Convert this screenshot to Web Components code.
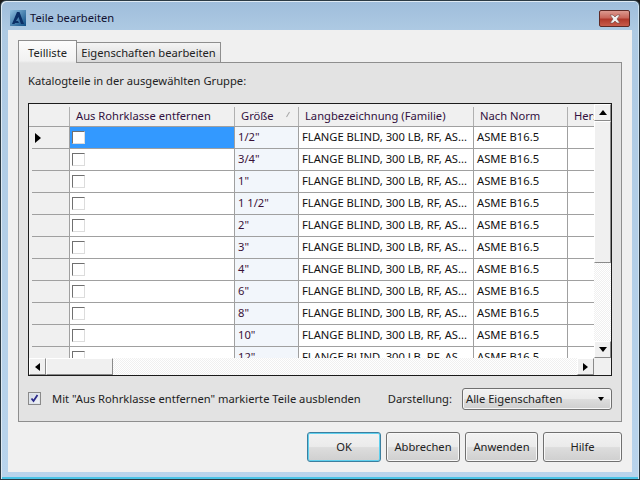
<!DOCTYPE html>
<html><head><meta charset="utf-8">
<style>
html,body{margin:0;padding:0;width:640px;height:480px;overflow:hidden;background:#1a1a1a}
body{font:11.2px/16px "Noto Sans","Open Sans",sans-serif;color:#222}
</style></head><body>
<template id="t-window"><style>
:host{display:flex;flex-direction:column;width:640px;height:480px;box-sizing:border-box;border:1px solid #2b3a44;border-radius:6px 6px 0 0;background:linear-gradient(#9fbddb 0,#aecae3 30px,#b9d4ec 100%);padding:0 7px 7px;box-shadow:inset 1px 1px 0 #dfeaf3,inset -1px 0 0 #cfe3f2,inset 0 -2px 0 #48c3e6}
.title{display:flex;align-items:center;height:29px;flex:none;gap:4px;padding:5px 0 0 2px;box-sizing:border-box;position:relative}
.t{font-size:11.2px;color:#101030}
.client{flex:1;background:#f0f0f0;display:flex;flex-direction:column;padding:10px 10px 0;min-height:0}
.x{position:absolute;right:2px;top:9px;width:31px;height:17px;box-sizing:border-box;border:1px solid #5e2a26;border-radius:2px;background:linear-gradient(#dc9a90,#c9675b 45%,#b0392c 55%,#c85c4c);display:flex;align-items:center;justify-content:center}
</style>
<div class="title">
<svg width="16" height="16" viewBox="0 0 16 16"><defs><linearGradient id="g" x1="0" x2="1" y1="0" y2="1"><stop offset="0" stop-color="#8fc0e0"/><stop offset="1" stop-color="#0e4c84"/></linearGradient></defs><rect width="16" height="16" fill="url(#g)"/><path d="M2 14L7 2h2.500L14 14h-3L8.500 7 6 11h2l1 2H5l-.500 1z" fill="#0a2f66"/></svg>
<span class="t"><slot name="title"></slot></span>
<div class="x"><svg width="14" height="10" viewBox="0 0 14 10"><path d="M2 1h3l2 2 2-2h3L9 5l3 4H9L7 7 5 9H2l3-4z" fill="#f2f2f2" stroke="#70453f" stroke-width=".6"/></svg></div>
</div>
<div class="client"><slot></slot></div>
</template>

<template id="t-tabs"><style>
:host{display:flex;flex-direction:column;flex:none}
.bar{display:flex;height:23px;align-items:flex-end;position:relative;z-index:1;margin-bottom:-1px}
.tab{box-sizing:border-box;border:1px solid #8e8e8e;border-bottom:0;height:20px;margin-bottom:1px;background:linear-gradient(#f4f4f4,#d9d9d9);width:145px;margin-left:-1px;text-align:center;white-space:nowrap;line-height:20px}
.tab.on{width:59px;height:23px;margin:0;line-height:23px;background:linear-gradient(#fcfcfc,#f1f1f1 90%,#e3e3e3)}
.panel{box-sizing:border-box;height:360px;background:#e3e3e3;border:1px solid #8e8e8e;padding:0 9px;display:flex;flex-direction:column}
</style>
<div class="bar"><div class="tab on">Teilliste</div><div class="tab">Eigenschaften bearbeiten</div></div>
<div class="panel"><slot></slot></div>
</template>

<template id="t-grid"><style>
:host{display:grid;grid-template-columns:1fr 17px;grid-template-rows:1fr 17px;height:273px;box-sizing:border-box;border:1px solid #1c1c1c;background:#fff;flex:none;overflow:hidden}
.view{overflow:hidden;min-width:0;min-height:0;background:#fff}
.corner{background:#f0f0f0}
</style>
<div class="view"><slot></slot></div>
<pb-scroll dir="v"></pb-scroll>
<pb-scroll dir="h"></pb-scroll>
<div class="corner"></div>
</template>

<template id="t-scroll"><style>
:host{display:flex;box-sizing:border-box;min-width:0;min-height:0;background:repeating-conic-gradient(#f0f0f0 0 25%,#fff 0 50%) 0 0/2px 2px}
:host([dir=v]){flex-direction:column}
.b{flex:none;width:17px;height:17px;box-sizing:border-box;background:#f0f0f0;border:1px solid;border-color:#fff #8a8a8a #8a8a8a #fff;display:flex;align-items:center;justify-content:center}
.th{flex:none;box-sizing:border-box;background:#f0f0f0;border:1px solid;border-color:#fff #8a8a8a #8a8a8a #fff}
:host([dir=v]) .th{height:142px;width:17px}
:host([dir=h]) .th{width:67px;height:17px}
.s{flex:1}
i{display:block;width:0;height:0;border:4px solid transparent}
.u{border-bottom:5px solid #000;border-top:0}.d{border-top:5px solid #000;border-bottom:0}.l{border-right:5px solid #000;border-left:0}.r{border-left:5px solid #000;border-right:0}
</style><div class="b"><i class="a1"></i></div><div class="th"></div><div class="s"></div><div class="b"><i class="a2"></i></div></template>

<template id="t-row"><style>
:host{display:grid;grid-template-columns:41px 165px 64px 175px 94px 60px;height:22px;box-sizing:border-box;white-space:nowrap;line-height:20px;width:599px}
.c{box-sizing:border-box;border-right:1px solid #a0a0a0;border-bottom:1px solid #a0a0a0;overflow:hidden;padding-left:3px;background:#fff}
.h{background:#f0f0f0;border-bottom:0;padding:0;position:relative;display:flex;align-items:center}
.h::after{content:"";position:absolute;left:3px;right:0;bottom:0;height:1px;background:#a0a0a0}
.k{padding-left:2px}
.k.sel{background:#3399ff}
.k span{display:block;width:13px;height:13px;margin-top:4px;box-sizing:border-box;border:1px solid;border-color:#707070 #dcdcdc #dcdcdc #707070;background:#fff}
.sz{background:#f2f6fb;color:#3a1238}
.n{color:#111}
svg{margin-left:6px}
</style>
<div class="c h" id="h"></div><div class="c k" id="k"><span></span></div><div class="c sz" id="sz"></div><div class="c n">FLANGE BLIND, 300 LB, RF, AS...</div><div class="c n">ASME B16.5</div><div class="c"></div></template>

<template id="t-head"><style>
:host{display:grid;grid-template-columns:41px 165px 64px 175px 94px 60px;height:23px;box-sizing:border-box;white-space:nowrap;line-height:24px;width:599px;background:#f0f0f0;border-bottom:1px solid #a0a0a0}
.c{padding-left:6px;position:relative;overflow:hidden;color:#321040;height:22px}
.c::after{content:"";position:absolute;right:0;top:3px;bottom:0;width:1px;background:#b0b0b0}
.c:first-child::after{top:0;background:#a0a0a0}
.c.s::before{content:"";position:absolute;right:8px;top:10px;width:6px;height:1px;background:#a8a8a8;transform:rotate(-60deg)}
</style>
<div class="c"></div><div class="c">Aus Rohrklasse entfernen</div><div class="c s">Größe</div><div class="c">Langbezeichnung (Familie)</div><div class="c">Nach Norm</div><div class="c">Hersteller</div></template>

<template id="t-btn"><style>
:host{display:flex;align-items:center;justify-content:center;box-sizing:border-box;height:30px;border:1px solid #707070;border-radius:3px;background:linear-gradient(#f2f2f2 0,#ebebeb 48%,#dddddd 52%,#cfcfcf 100%);box-shadow:inset 0 0 0 1px #f8f8f8;flex:none}
:host([primary]){border-color:#3c7f9f;box-shadow:inset 0 0 0 1px #5fd0ee}
</style><slot></slot></template>

<template id="t-select"><style>
:host{display:flex;align-items:center;box-sizing:border-box;width:150px;height:22px;flex:none;border:1px solid #707070;border-radius:3px;background:linear-gradient(#f2f2f2,#ebebeb 48%,#ddd 52%,#cfcfcf);padding:1px 7px 0 3px;justify-content:space-between;box-shadow:inset 0 0 0 1px #f6f6f6}
i{width:0;height:0;border:3.500px solid transparent;border-top:4px solid #000;border-bottom:0}
</style><slot></slot><i></i></template>

<template id="t-check"><style>
:host{display:inline-flex;width:13px;height:13px;box-sizing:border-box;border:1px solid #8a8a8a;background:linear-gradient(135deg,#cfd6e2,#f4f6f9);box-shadow:inset 0 0 0 1px #e0e5ec;align-items:center;justify-content:center;flex:none}
</style><svg width="11" height="11" viewBox="0 0 11 11"><path d="M2.500 5.500l2 2.500L8.500 2" fill="none" stroke="#2a2a8a" stroke-width="1.800"/></svg></template>

<pb-window>
<span slot="title">Teile bearbeiten</span>
<pb-tabs>
  <pb-label>Katalogteile in der ausgewählten Gruppe:</pb-label>
  <pb-grid id="grid">
    <pb-head></pb-head>
  </pb-grid>
  <pb-options>
    <pb-check></pb-check><span style="margin-left:11px;white-space:nowrap">Mit "Aus Rohrklasse entfernen" markierte Teile ausblenden</span>
    <span style="margin-left:auto;margin-right:10px;white-space:nowrap">Darstellung:</span>
    <pb-select>Alle Eigenschaften</pb-select>
  </pb-options>
</pb-tabs>
<pb-actions>
  <pb-btn primary style="width:74px">OK</pb-btn>
  <pb-btn style="width:74px">Abbrechen</pb-btn>
  <pb-btn style="width:73px">Anwenden</pb-btn>
  <pb-btn style="width:79px">Hilfe</pb-btn>
</pb-actions>
</pb-window>

<script>
function tpl(name,id,after){customElements.define(name,class extends HTMLElement{constructor(){super();const r=this.attachShadow({mode:'open'});r.appendChild(document.getElementById(id).content.cloneNode(true));}
connectedCallback(){after&&after(this)}});}
tpl('pb-window','t-window');tpl('pb-tabs','t-tabs');tpl('pb-grid','t-grid');
tpl('pb-scroll','t-scroll',e=>{const v=e.getAttribute('dir')=='v';e.shadowRoot.querySelector('.b i').className=v?'u':'l';e.shadowRoot.querySelectorAll('.b i')[1].className=v?'d':'r';});
tpl('pb-head','t-head');
tpl('pb-row','t-row',e=>{const r=e.shadowRoot;r.getElementById('sz').textContent=e.getAttribute('size');
 if(e.hasAttribute('sel')){r.getElementById('k').classList.add('sel');r.getElementById('h').innerHTML='<svg width="6" height="10" viewBox="0 0 6 10"><path d="M0 0l6 5-6 5z" fill="#000"/></svg>';}});
tpl('pb-btn','t-btn');tpl('pb-select','t-select');tpl('pb-check','t-check');
customElements.define('pb-label',class extends HTMLElement{constructor(){super();this.attachShadow({mode:'open'}).innerHTML='<style>:host{display:block;height:40px;line-height:36px;flex:none}</style><slot></slot>';}});
customElements.define('pb-options',class extends HTMLElement{constructor(){super();this.attachShadow({mode:'open'}).innerHTML='<style>:host{display:flex;align-items:center;height:45px;flex:none}</style><slot></slot>';}});
customElements.define('pb-actions',class extends HTMLElement{constructor(){super();this.attachShadow({mode:'open'}).innerHTML='<style>:host{display:flex;justify-content:flex-end;gap:5px;padding-top:10px;flex:none}</style><slot></slot>';}});
const g=document.getElementById('grid');
['1/2"','3/4"','1"','1 1/2"','2"','3"','4"','6"','8"','10"','12"'].forEach((s,i)=>{const r=document.createElement('pb-row');r.setAttribute('size',s);if(!i)r.setAttribute('sel','');g.appendChild(r);});
</script>
</body></html>
